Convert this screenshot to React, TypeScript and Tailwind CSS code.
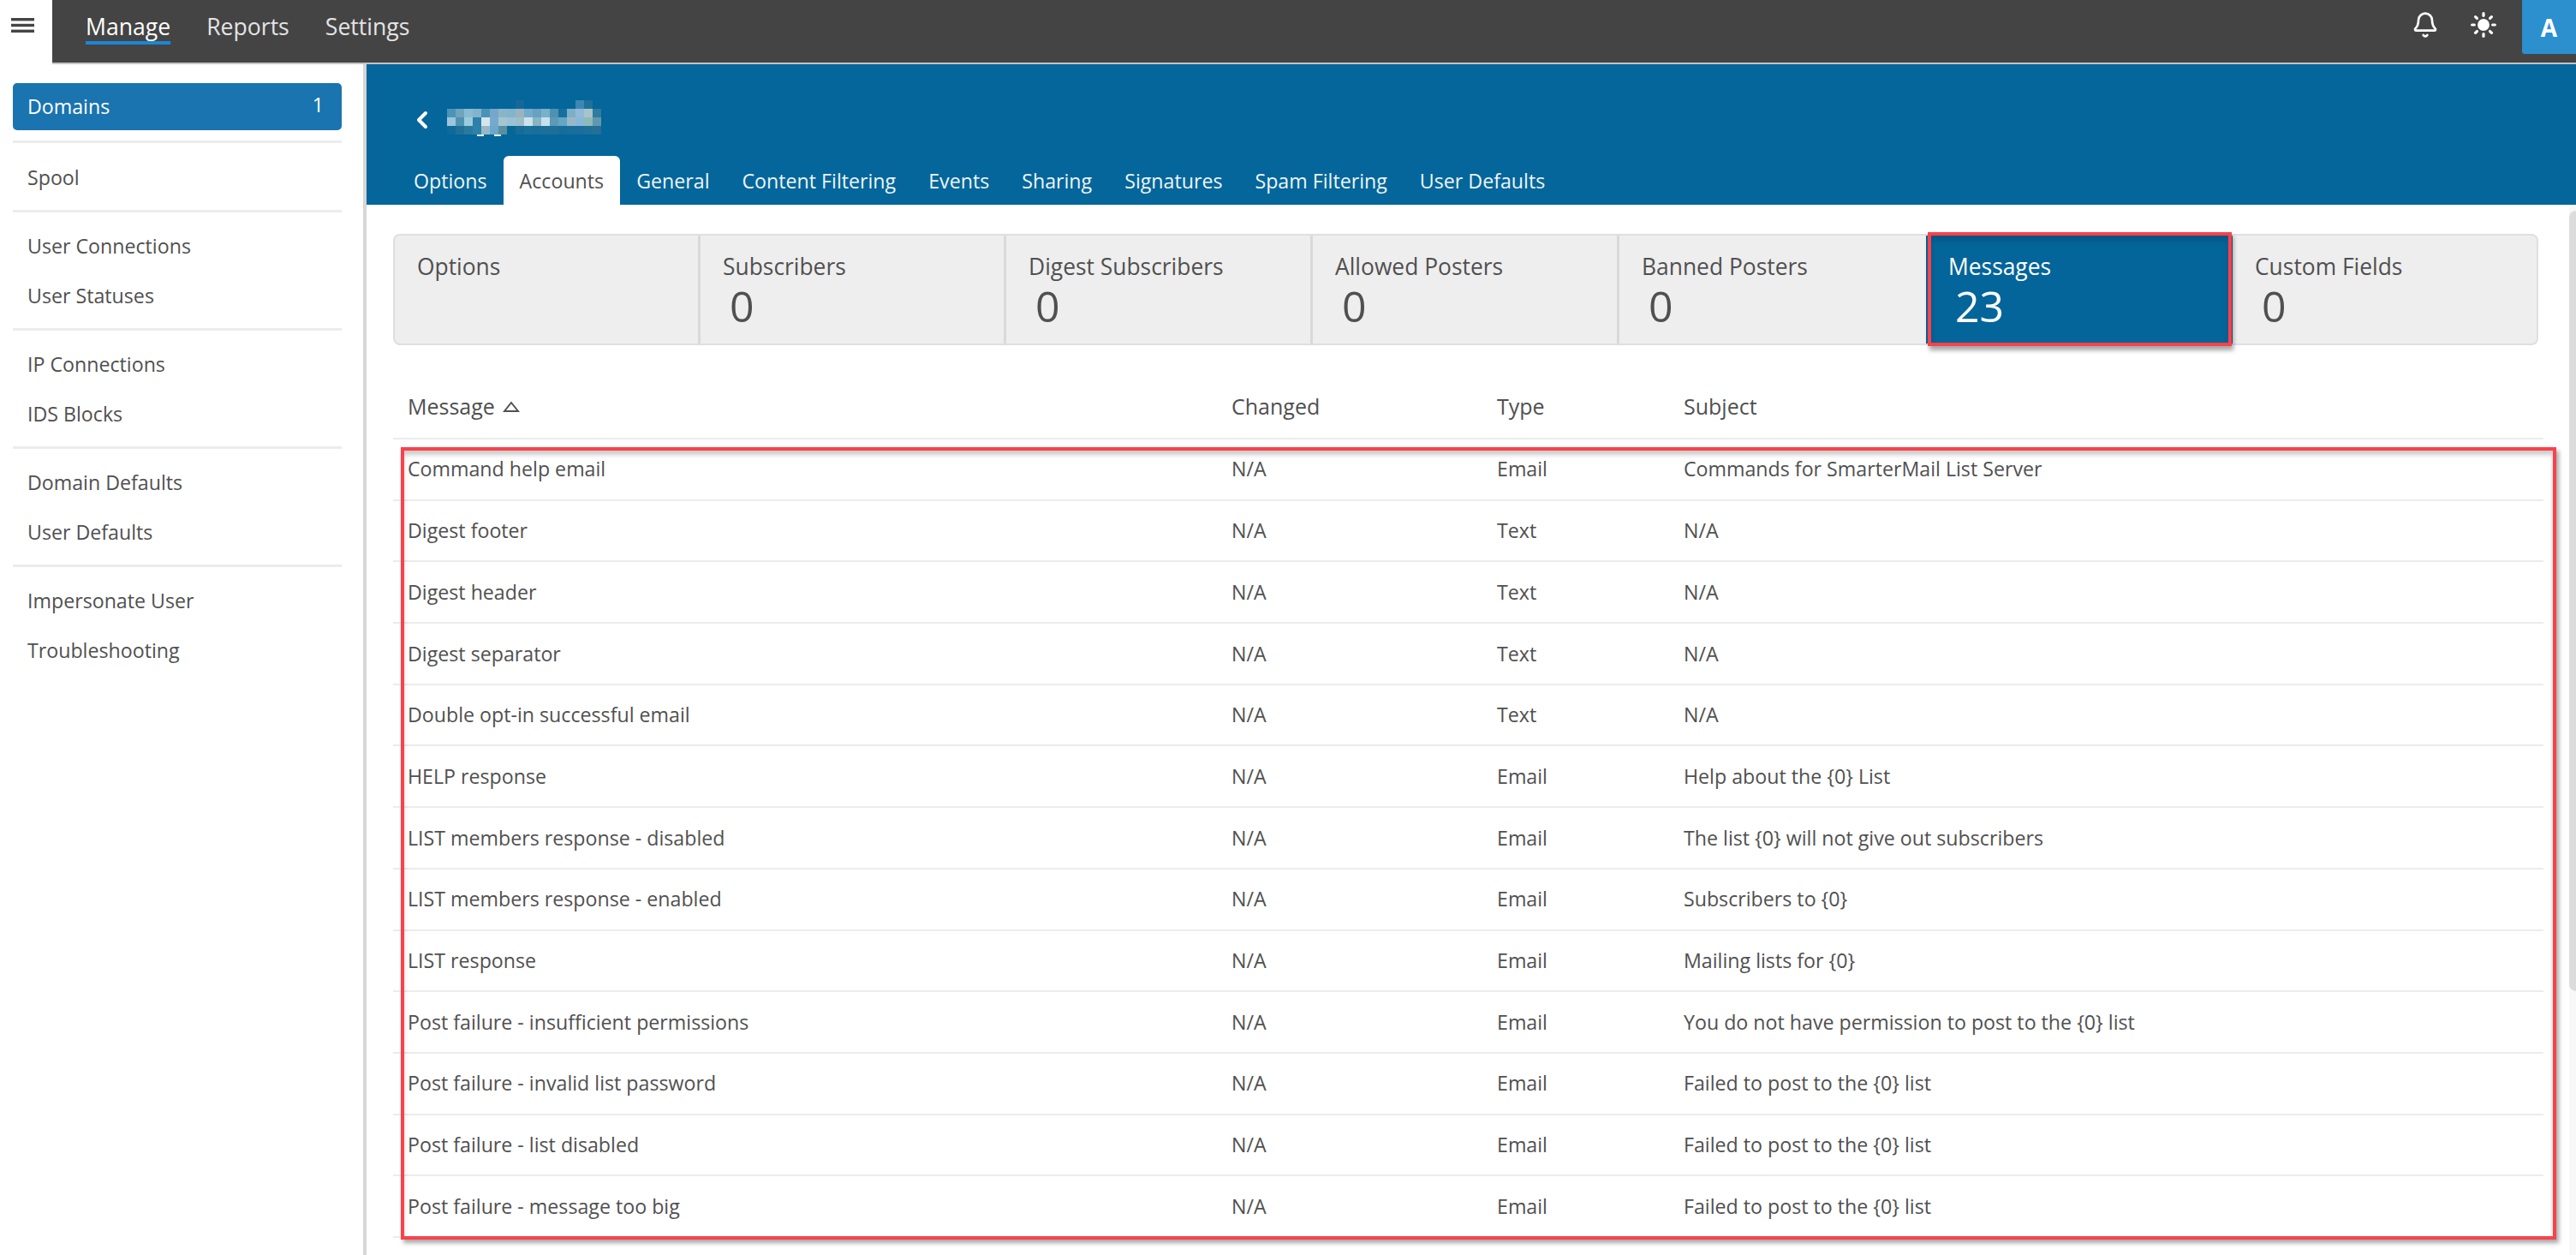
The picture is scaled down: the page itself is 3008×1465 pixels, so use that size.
import { Bell, ChevronLeft, Sun } from "lucide-react";

const font = "font-['Open_Sans',sans-serif]";

const tabs = ["Options", "Accounts", "General", "Content Filtering", "Events", "Sharing", "Signatures", "Spam Filtering", "User Defaults"];

const sideGroups = [["Spool"], ["User Connections", "User Statuses"], ["IP Connections", "IDS Blocks"], ["Domain Defaults", "User Defaults"], ["Impersonate User", "Troubleshooting"]];

const tiles = [
  { label: "Options" },
  { label: "Subscribers", count: 0 },
  { label: "Digest Subscribers", count: 0 },
  { label: "Allowed Posters", count: 0 },
  { label: "Banned Posters", count: 0 },
  { label: "Messages", count: 23, active: true },
  { label: "Custom Fields", count: 0 },
];

const rows = [
  ["Command help email", "Email", "Commands for SmarterMail List Server"],
  ["Digest footer", "Text", "N/A"],
  ["Digest header", "Text", "N/A"],
  ["Digest separator", "Text", "N/A"],
  ["Double opt-in successful email", "Text", "N/A"],
  ["HELP response", "Email", "Help about the {0} List"],
  ["LIST members response - disabled", "Email", "The list {0} will not give out subscribers"],
  ["LIST members response - enabled", "Email", "Subscribers to {0}"],
  ["LIST response", "Email", "Mailing lists for {0}"],
  ["Post failure - insufficient permissions", "Email", "You do not have permission to post to the {0} list"],
  ["Post failure - invalid list password", "Email", "Failed to post to the {0} list"],
  ["Post failure - list disabled", "Email", "Failed to post to the {0} list"],
  ["Post failure - message too big", "Email", "Failed to post to the {0} list"],
];

// mosaic that hides the domain name in the screenshot, 10px blocks
const mosaic: (string | null)[][] = [
  [null, null, null, null, null, null, null, null, "#15699a", null, null, null, null, null, null, "#3c88b2", "#1e7199", null],
  ["#4a94ba", "#6fa4bd", "#87bcd4", "#84b3c9", "#4a93b8", "#76a6c9", "#8cb4c8", "#84b4cc", "#9ab4bf", "#72abcb", "#68a2c0", "#7ab0ca", "#4f91b0", "#16709f", "#7fafc5", "#90bad8", "#a8c4cb", "#2f7ca0"],
  ["#9cc6da", "#4f93b3", "#9accdc", "#2a7fac", "#d5e5ec", "#76aacc", "#a2c6d2", "#9bc2d4", "#9fbdc8", "#cde2ea", "#88b4c4", "#c4e2ec", "#5c9ab5", "#65a5c6", "#98b8c8", "#88b8d8", "#8ebab8", "#6098b0"],
  ["#0d6a9a", "#216f96", "#2a7a9f", "#2c82aa", "#98b8c8", "#6ca8cc", "#58909f", "#066698", "#166c98", "#18709c", "#1a6e9a", "#1c6f9b", "#1e6f98", "#166c9a", "#186e9a", "#1a6e9c", "#1e709a", "#246f96"],
];

function Mosaic() {
  return (
    <svg width="180" height="42" viewBox="0 0 180 42" aria-hidden="true">
      {mosaic.map((line, y) =>
        line.map((c, x) => (c ? <rect key={`${x}-${y}`} x={x * 10} y={y * 10} width="10" height="10" fill={c} /> : null)),
      )}
      <rect x="35" y="40" width="8" height="2" fill="#e8f2f6" />
      <rect x="55" y="40" width="8" height="2" fill="#e8f2f6" />
    </svg>
  );
}

export default function App() {
  return (
    <div className={`${font} flex h-[1465px] w-[3008px] flex-col overflow-hidden bg-white text-[23.2px] text-[#505050]`}>
      <header className="flex h-[75px] shrink-0">
        <div className="w-[61px] bg-white pl-[13px] pt-[21px]">
          <svg width="27" height="17" viewBox="0 0 27 17" fill="#444" aria-hidden="true">
            <rect y="0" width="27" height="3.4" />
            <rect y="6.8" width="27" height="3.4" />
            <rect y="13.6" width="27" height="3.4" />
          </svg>
        </div>
        <div className="flex flex-1 items-start justify-between border-b-2 border-[#c4c4c4] bg-[#444444]">
          <nav className="flex gap-[42px] pl-[39px] pt-[11px] text-[26.6px] leading-[40px] text-[#e4e4e4]">
            <span className="text-white underline decoration-[#1b86d6] decoration-[4px] underline-offset-[7px]">Manage</span>
            <span>Reports</span>
            <span>Settings</span>
          </nav>
          <div className="flex items-start">
            <Bell className="mr-[36px] mt-[13px] h-[32px] w-[32px] text-white" strokeWidth={2} />
            <Sun className="mr-[29px] mt-[13px] h-[32px] w-[32px] fill-white text-white" strokeWidth={2.4} />
            <div className="flex h-[63px] w-[63px] items-center justify-center rounded-bl-[3px] bg-[#2c8fce] text-[28px] font-bold text-white">A</div>
          </div>
        </div>
      </header>

      <div className="flex min-h-0 flex-1">
        <aside className="w-[428px] shrink-0 border-r-4 border-[#d6d6d6] pl-[15px] pr-[25px] pt-[22px]">
          <div className="flex h-[55px] items-center justify-between rounded-[5px] bg-[#1a74af] pl-[17px] pr-[21px] text-white">
            <span>Domains</span>
            <span className="-mt-[4px]">1</span>
          </div>
          <div className="mt-[12px] h-[3px] bg-[#ececec]" />
          {sideGroups.map((group, i) => (
            <div key={i}>
              <div className={i === 0 ? "mt-[11px]" : "mt-[10px]"}>
                {group.map((item) => (
                  <div key={item} className="flex h-[58px] items-center pl-[17px]">{item}</div>
                ))}
              </div>
              {i < sideGroups.length - 1 && <div className="mt-[9px] h-[3px] bg-[#ececec]" />}
            </div>
          ))}
        </aside>

        <main className="flex min-w-0 flex-1 flex-col">
          <div className="flex h-[164px] shrink-0 flex-col justify-between bg-[#04669a] text-[#eef5f9]">
            <div className="flex items-start pl-[49px] pt-[42px]">
              <ChevronLeft className="mt-[7px] h-[32px] w-[32px] text-white" strokeWidth={3} />
              <div className="ml-[13px]"><Mosaic /></div>
            </div>
            <div className="flex pl-[36px]">
              {tabs.map((tab) => (
                <div
                  key={tab}
                  className={`flex h-[57px] items-center rounded-t-[6px] px-[19px] pt-[2px] text-[23.2px] ${tab === "Accounts" ? "bg-white text-[#505050]" : ""}`}
                >
                  {tab}
                </div>
              ))}
            </div>
          </div>

          <div className="flex min-h-0 flex-1">
            <div className="min-w-0 flex-1 pl-[31px] pr-[30px] pt-[34px]">
              <div className="mr-[6px] grid h-[130px] grid-cols-[357px_357px_358px_358px_358px_358px_1fr] rounded-[8px] border-2 border-[#dfdfdf] bg-[#eeeeee]">
                {tiles.map((t, i) => (
                  <div
                    key={t.label}
                    className={`relative pl-[26px] pt-[17px] ${i < 4 ? "border-r-3 border-[#d9d9d9]" : ""} ${t.active ? "bg-[#04659a] text-white" : ""}`}
                  >
                    <div className="text-[26.4px] leading-[38px]">{t.label}</div>
                    {t.count !== undefined && <div className="pl-[8px] text-[50px] leading-[54px]">{t.count}</div>}
                    {t.active && (
                      <div className="pointer-events-none absolute -bottom-[3px] -top-[4px] left-[2px] right-[1px] border-4 border-[#f9424a] shadow-[2px_5px_5px_rgba(0,0,0,0.35),inset_0_6px_6px_rgba(0,0,0,0.15)]" />
                    )}
                  </div>
                ))}
              </div>

              <div className="mt-[35px] grid h-[75px] grid-cols-[962px_310px_218px_1fr] items-center border-b-2 border-[#ececec] pl-[17px] text-[25px]">
                <div className="flex items-center gap-[9px]">
                  Message
                  <svg width="20" height="14" viewBox="0 0 20 14" fill="none" stroke="#505050" strokeWidth="2" aria-hidden="true">
                    <path d="M10 2 L18 12 L2 12 Z" />
                  </svg>
                </div>
                <div>Changed</div>
                <div>Type</div>
                <div>Subject</div>
              </div>

              <div className="relative">
                {rows.map(([name, type, subject]) => (
                  <div key={name} className="grid h-[71.7px] grid-cols-[962px_310px_218px_1fr] items-center border-b-2 border-[#ececec] pl-[17px]">
                    <div>{name}</div>
                    <div>N/A</div>
                    <div>{type}</div>
                    <div>{subject}</div>
                  </div>
                ))}
                <div className="pointer-events-none absolute -bottom-[2px] left-[9px] -right-[15px] top-[9px] border-4 border-[#f9424a] shadow-[3px_4px_5px_rgba(0,0,0,0.35),inset_0_5px_5px_rgba(0,0,0,0.2)]" />
              </div>
            </div>
            <div className="w-[8px] shrink-0 bg-[#f8f8f8] pt-[7px]">
              <div className="h-[911px] rounded-l-[8px] bg-[#dcdcdc]" />
            </div>
          </div>
        </main>
      </div>
    </div>
  );
}
